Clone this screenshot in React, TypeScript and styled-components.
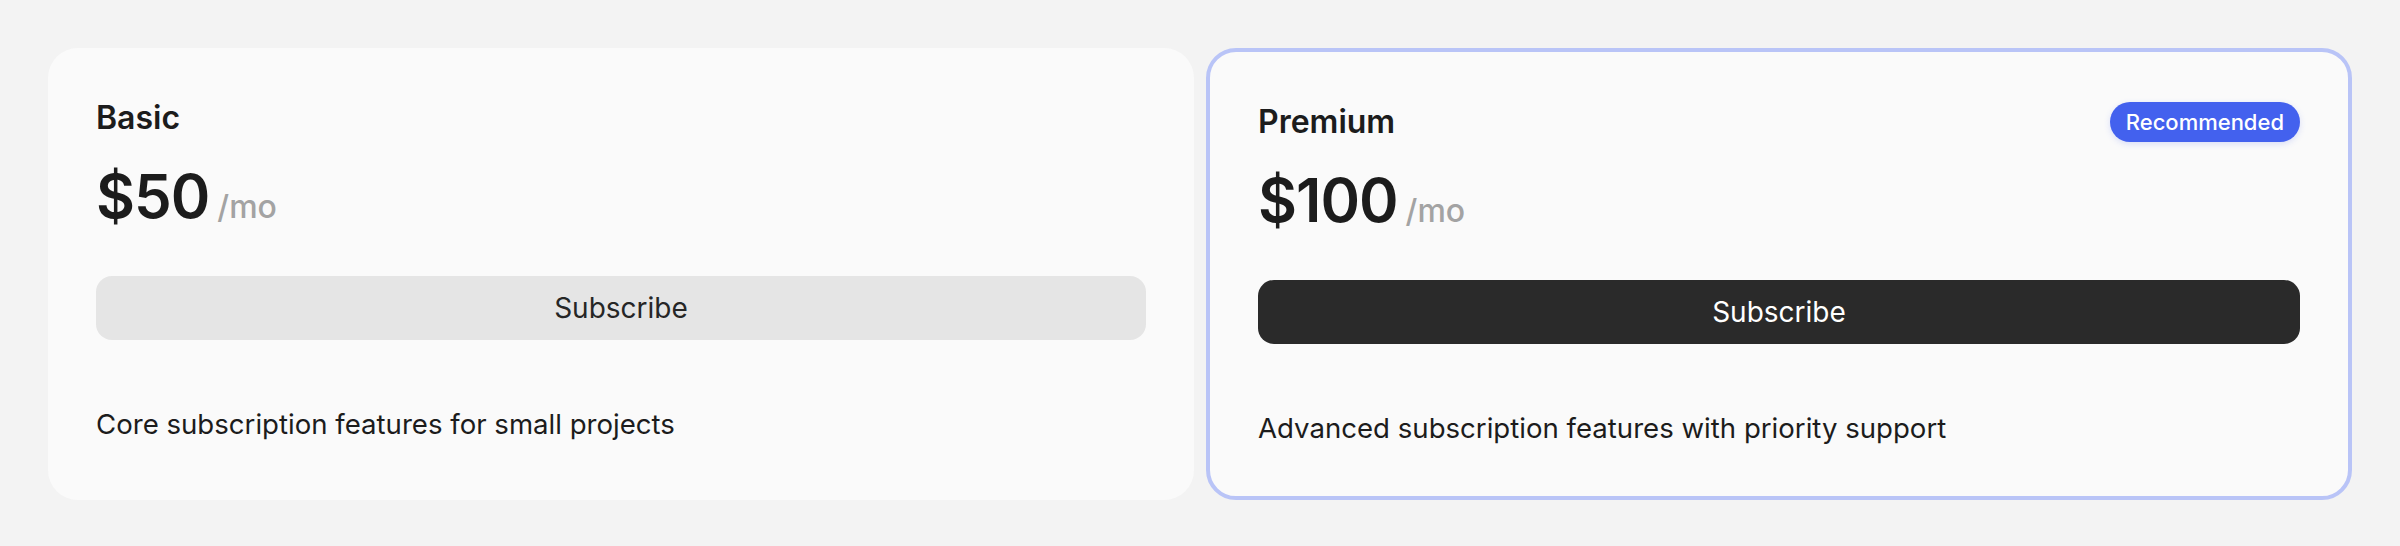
import React from 'react'
import styled, { createGlobalStyle } from 'styled-components'

const GlobalStyle = createGlobalStyle`
  * { box-sizing: border-box; }
  html, body { margin: 0; padding: 0; background: #f3f3f3; }
  body { font-family: Inter, 'Noto Sans', 'Liberation Sans', sans-serif; color: #1c1c1c; }
`

const Page = styled.div`
  display: grid;
  grid-template-columns: 1fr 1fr;
  gap: 12px;
  padding: 48px;
  min-height: 546px;
  align-items: stretch;
`

const Card = styled.div<{ $featured?: boolean }>`
  display: flex;
  flex-direction: column;
  padding: 48px;
  height: 452px;
  background: #fafafa;
  border-radius: 30px;
  border: ${({ $featured }) => ($featured ? '4px solid #b9c4f7' : 'none')};
`

const Header = styled.div`
  display: flex;
  align-items: center;
  justify-content: space-between;
  height: 40px;
  margin-top: 2px;
`

const Title = styled.h2`
  margin: 0;
  font-size: 32px;
  line-height: 40px;
  font-weight: 600;
  color: #1c1c1c;
`

const Badge = styled.span`
  display: inline-flex;
  align-items: center;
  height: 40px;
  padding: 0 16px;
  border-radius: 999px;
  background: #4361ee;
  color: #ffffff;
  font-size: 22px;
  font-weight: 500;
  box-shadow: 0 2px 6px rgba(67, 97, 238, 0.18);
`

const PriceRow = styled.div`
  display: flex;
  align-items: baseline;
  height: 56px;
  margin-top: 30px;
`

const Amount = styled.span`
  font-size: 60px;
  line-height: 56px;
  font-weight: 600;
  letter-spacing: -1px;
  color: #1c1c1c;
`

const Period = styled.span`
  margin-left: 8px;
  font-size: 32px;
  line-height: 32px;
  font-weight: 500;
  color: #a3a3a3;
`

const SubscribeButton = styled.button<{ $primary?: boolean }>`
  flex-shrink: 0;
  margin-top: 52px;
  height: 64px;
  width: 100%;
  border: none;
  border-radius: 16px;
  font-family: inherit;
  font-size: 28px;
  font-weight: 400;
  cursor: pointer;
  background: ${({ $primary }) => ($primary ? '#2a2a2a' : '#e5e5e5')};
  color: ${({ $primary }) => ($primary ? '#ffffff' : '#262626')};
`

const Description = styled.p`
  margin: 64px 0 0;
  font-size: 27.6px;
  line-height: 40px;
  color: #1c1c1c;
`

const plans = [
  { name: 'Basic', price: '$50', text: 'Core subscription features for small projects', featured: false },
  { name: 'Premium', price: '$100', text: 'Advanced subscription features with priority support', featured: true },
]

export default function App() {
  return (
    <>
      <GlobalStyle />
      <Page>
        {plans.map(p => (
          <Card key={p.name} $featured={p.featured}>
            <Header>
              <Title>{p.name}</Title>
              {p.featured && <Badge>Recommended</Badge>}
            </Header>
            <PriceRow>
              <Amount>{p.price}</Amount>
              <Period>/mo</Period>
            </PriceRow>
            <SubscribeButton $primary={p.featured}>Subscribe</SubscribeButton>
            <Description>{p.text}</Description>
          </Card>
        ))}
      </Page>
    </>
  )
}
